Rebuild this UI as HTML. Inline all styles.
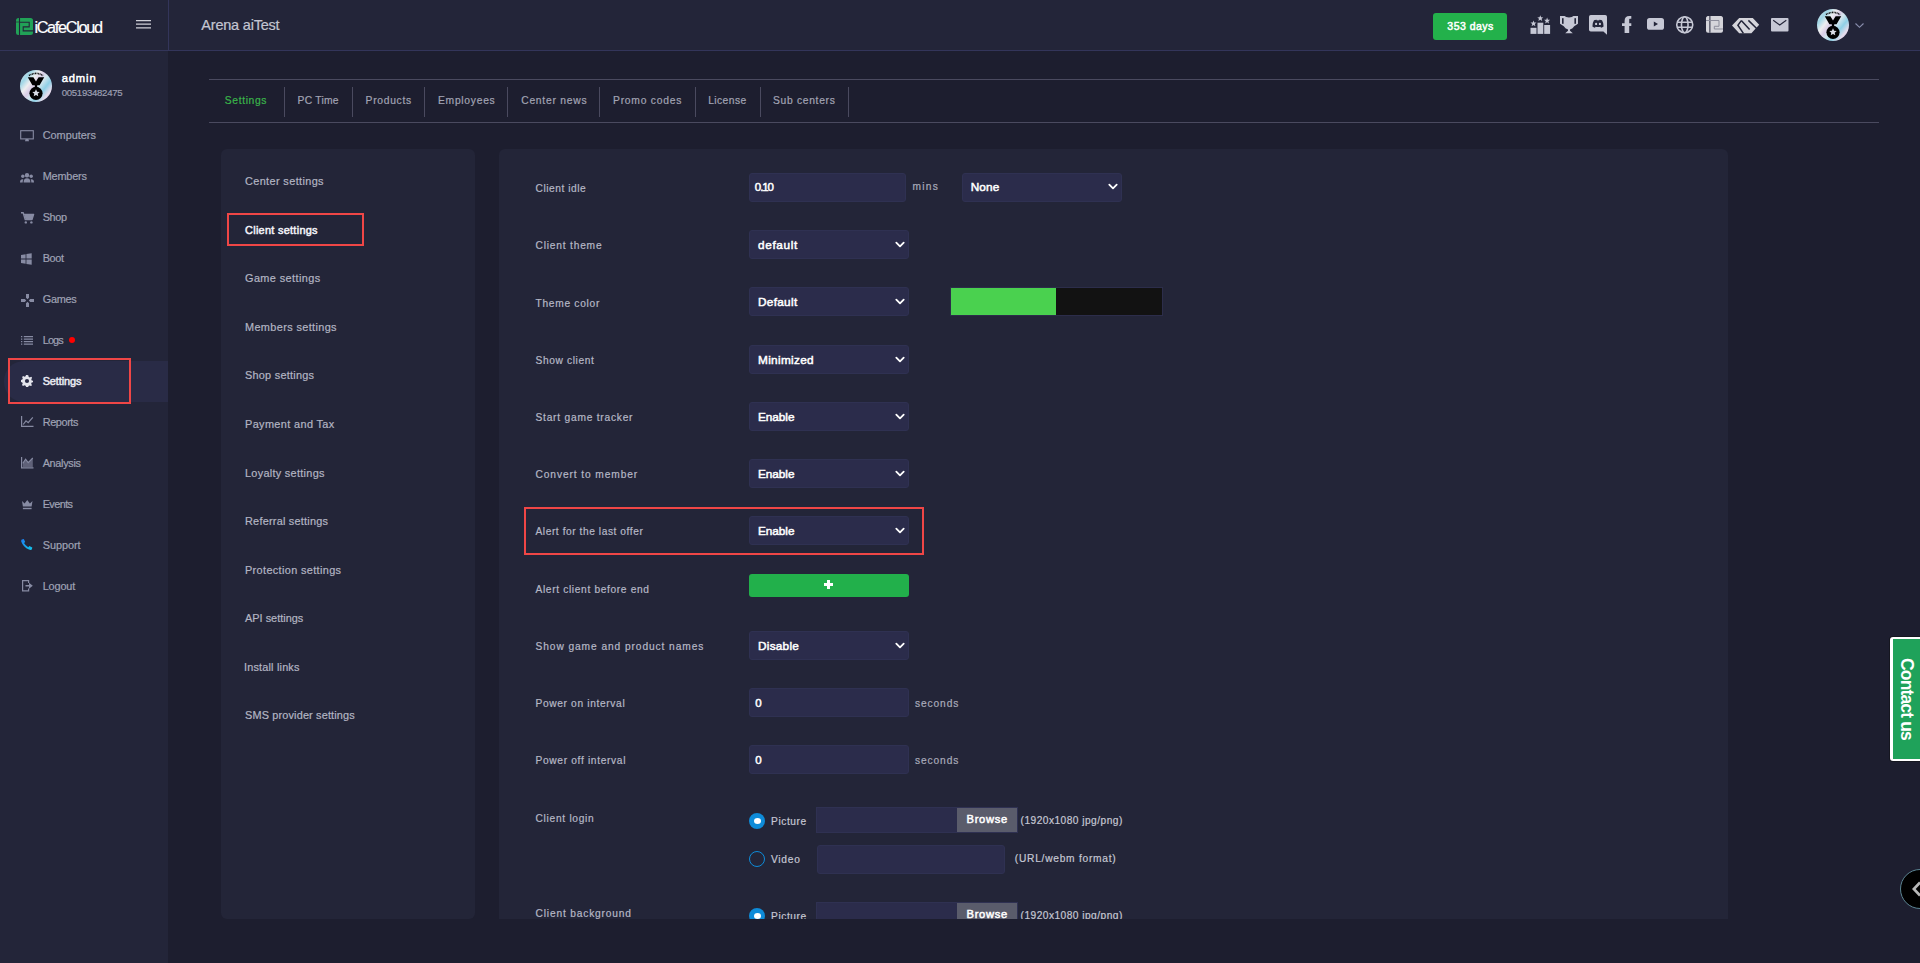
<!DOCTYPE html>
<html><head><meta charset="utf-8">
<style>
html,body{margin:0;padding:0;}
body{width:1920px;height:963px;overflow:hidden;background:#1d1e2f;position:relative;font-family:"Liberation Sans",sans-serif;}
.a{position:absolute;box-sizing:border-box;}
.t{position:absolute;white-space:nowrap;line-height:1;}
.s{-webkit-text-stroke:0.2px currentColor;}
.m{-webkit-text-stroke:0.5px currentColor;}
svg{position:absolute;overflow:visible;}
.clip{position:absolute;left:499px;top:149px;width:1229px;height:770px;overflow:hidden;}
</style></head><body>
<div class="a" style="left:0px;top:0px;width:1920px;height:50px;background:#232539;"></div>
<div class="a" style="left:0px;top:50px;width:1920px;height:1px;background:#33355a;"></div>
<div class="a" style="left:168px;top:0px;width:1px;height:50px;background:#33355a;"></div>
<div class="a" style="left:1433px;top:13px;width:74px;height:27px;background:#23b14b;border-radius:3px;"></div>
<div class="a" style="left:0px;top:51px;width:168px;height:912px;background:#232539;"></div>
<div class="a" style="left:4px;top:361px;width:164px;height:41px;background:#292b46;border-radius:20px 0 0 20px;"></div>
<div class="a" style="left:8px;top:358px;width:123px;height:46px;border:2px solid #ef4646;"></div>
<div class="a" style="left:69px;top:337px;width:6px;height:6px;background:#ff0000;border-radius:50%;"></div>
<div class="a" style="left:209px;top:79px;width:1670px;height:1px;background:#4a4a5f;"></div>
<div class="a" style="left:209px;top:122px;width:1670px;height:1px;background:#4a4a5f;"></div>
<div class="a" style="left:284px;top:87px;width:1px;height:30px;background:#4a4a5f;"></div>
<div class="a" style="left:352px;top:87px;width:1px;height:30px;background:#4a4a5f;"></div>
<div class="a" style="left:424px;top:87px;width:1px;height:30px;background:#4a4a5f;"></div>
<div class="a" style="left:507px;top:87px;width:1px;height:30px;background:#4a4a5f;"></div>
<div class="a" style="left:599px;top:87px;width:1px;height:30px;background:#4a4a5f;"></div>
<div class="a" style="left:695px;top:87px;width:1px;height:30px;background:#4a4a5f;"></div>
<div class="a" style="left:760px;top:87px;width:1px;height:30px;background:#4a4a5f;"></div>
<div class="a" style="left:848px;top:87px;width:1px;height:30px;background:#4a4a5f;"></div>
<div class="a" style="left:221px;top:149px;width:254px;height:770px;background:#232538;border-radius:6px;"></div>
<div class="a" style="left:499px;top:149px;width:1229px;height:770px;background:#232538;border-radius:6px 6px 0 0;"></div>
<div class="a" style="left:227px;top:213px;width:137px;height:33px;border:2px solid #ef4646;"></div>
<div class="a" style="left:749px;top:173px;width:157px;height:29px;background:#2b2c4b;border:1px solid #2f3152;border-radius:3px;"></div>
<div class="a" style="left:962px;top:173px;width:160px;height:29px;background:#2b2c4b;border:1px solid #2f3152;border-radius:3px;"></div>
<svg style="left:1108px;top:183.5px" width="10" height="7" viewBox="0 0 10 7"><path d="M1.3 0.6 L5 4.3 L8.7 0.6" fill="none" stroke="#ffffff" stroke-width="1.8" stroke-linecap="round" stroke-linejoin="round"/></svg>
<div class="a" style="left:749px;top:230px;width:160px;height:29px;background:#2b2c4b;border:1px solid #2f3152;border-radius:3px;"></div>
<svg style="left:895px;top:241.5px" width="10" height="7" viewBox="0 0 10 7"><path d="M1.3 0.6 L5 4.3 L8.7 0.6" fill="none" stroke="#ffffff" stroke-width="1.8" stroke-linecap="round" stroke-linejoin="round"/></svg>
<div class="a" style="left:749px;top:287px;width:160px;height:29px;background:#2b2c4b;border:1px solid #2f3152;border-radius:3px;"></div>
<svg style="left:895px;top:298.5px" width="10" height="7" viewBox="0 0 10 7"><path d="M1.3 0.6 L5 4.3 L8.7 0.6" fill="none" stroke="#ffffff" stroke-width="1.8" stroke-linecap="round" stroke-linejoin="round"/></svg>
<div class="a" style="left:749px;top:345px;width:160px;height:29px;background:#2b2c4b;border:1px solid #2f3152;border-radius:3px;"></div>
<svg style="left:895px;top:356.5px" width="10" height="7" viewBox="0 0 10 7"><path d="M1.3 0.6 L5 4.3 L8.7 0.6" fill="none" stroke="#ffffff" stroke-width="1.8" stroke-linecap="round" stroke-linejoin="round"/></svg>
<div class="a" style="left:749px;top:402px;width:160px;height:29px;background:#2b2c4b;border:1px solid #2f3152;border-radius:3px;"></div>
<svg style="left:895px;top:413.5px" width="10" height="7" viewBox="0 0 10 7"><path d="M1.3 0.6 L5 4.3 L8.7 0.6" fill="none" stroke="#ffffff" stroke-width="1.8" stroke-linecap="round" stroke-linejoin="round"/></svg>
<div class="a" style="left:749px;top:459px;width:160px;height:29px;background:#2b2c4b;border:1px solid #2f3152;border-radius:3px;"></div>
<svg style="left:895px;top:470.5px" width="10" height="7" viewBox="0 0 10 7"><path d="M1.3 0.6 L5 4.3 L8.7 0.6" fill="none" stroke="#ffffff" stroke-width="1.8" stroke-linecap="round" stroke-linejoin="round"/></svg>
<div class="a" style="left:749px;top:516px;width:160px;height:29px;background:#2b2c4b;border:1px solid #2f3152;border-radius:3px;"></div>
<svg style="left:895px;top:527.5px" width="10" height="7" viewBox="0 0 10 7"><path d="M1.3 0.6 L5 4.3 L8.7 0.6" fill="none" stroke="#ffffff" stroke-width="1.8" stroke-linecap="round" stroke-linejoin="round"/></svg>
<div class="a" style="left:749px;top:631px;width:160px;height:29px;background:#2b2c4b;border:1px solid #2f3152;border-radius:3px;"></div>
<svg style="left:895px;top:642.5px" width="10" height="7" viewBox="0 0 10 7"><path d="M1.3 0.6 L5 4.3 L8.7 0.6" fill="none" stroke="#ffffff" stroke-width="1.8" stroke-linecap="round" stroke-linejoin="round"/></svg>
<div class="a" style="left:950px;top:287px;width:213px;height:29px;background:#121212;border:1px solid #2c2d4a;"></div>
<div class="a" style="left:951px;top:288px;width:105px;height:27px;background:#4ad14f;"></div>
<div class="a" style="left:749px;top:574px;width:160px;height:23px;background:#22b04b;border-radius:3px;"></div>
<div class="a" style="left:824px;top:583px;width:9px;height:3px;background:#fff;"></div>
<div class="a" style="left:827px;top:580px;width:3px;height:9px;background:#fff;"></div>
<div class="a" style="left:524px;top:507px;width:400px;height:48px;border:2px solid #ef4646;"></div>
<div class="a" style="left:749px;top:688px;width:160px;height:29px;background:#2b2c4b;border:1px solid #2f3152;border-radius:3px;"></div>
<div class="a" style="left:749px;top:745px;width:160px;height:29px;background:#2b2c4b;border:1px solid #2f3152;border-radius:3px;"></div>
<div class="a" style="left:749px;top:813px;width:16px;height:16px;border-radius:50%;background:#0e8bd8;"></div>
<div class="a" style="left:753.5px;top:818px;width:7px;height:6px;border-radius:50%;background:#fff;"></div>
<div class="a" style="left:816px;top:807px;width:202px;height:26px;background:#2b2c4b;border:1px solid #2f3152;"></div>
<div class="a" style="left:957px;top:808px;width:60px;height:24px;background:#5a5c6b;"></div>
<div class="a" style="left:749px;top:851px;width:16px;height:16px;border-radius:50%;border:1.5px solid #0e8bd8;"></div>
<div class="a" style="left:817px;top:845px;width:188px;height:29px;background:#2b2c4b;border:1px solid #2f3152;border-radius:3px;"></div>
<div class="a" style="left:749px;top:908px;width:16px;height:16px;border-radius:50%;background:#0e8bd8;"></div>
<div class="a" style="left:753.5px;top:913px;width:7px;height:6px;border-radius:50%;background:#fff;"></div>
<div class="a" style="left:816px;top:902px;width:202px;height:26px;background:#2b2c4b;border:1px solid #2f3152;"></div>
<div class="a" style="left:957px;top:903px;width:60px;height:24px;background:#5a5c6b;"></div>
<div class="t s" id="t0" style="left:34.40px;top:19.10px;font-size:16.3px;font-weight:400;color:#ffffff;letter-spacing:-1.333px;">iCafeCloud</div>
<div class="t s" id="t1" style="left:201.30px;top:18.22px;font-size:14.5px;font-weight:400;color:#c3c5d2;letter-spacing:-0.206px;">Arena aiTest</div>
<div class="t m" id="t2" style="left:1447.30px;top:21.11px;font-size:10.5px;font-weight:400;color:#ffffff;letter-spacing:0.491px;">353 days</div>
<div class="t m" id="t3" style="left:61.70px;top:73.42px;font-size:11.2px;font-weight:400;color:#ffffff;letter-spacing:0.863px;">admin</div>
<div class="t s" id="t4" style="left:61.70px;top:88.27px;font-size:9.6px;font-weight:400;color:#9c9fb2;letter-spacing:-0.281px;">005193482475</div>
<div class="t s" id="t5" style="left:42.70px;top:130.37px;font-size:10.9px;font-weight:400;color:#9fa2b4;letter-spacing:-0.015px;">Computers</div>
<div class="t s" id="t6" style="left:42.70px;top:171.37px;font-size:10.9px;font-weight:400;color:#9fa2b4;letter-spacing:-0.190px;">Members</div>
<div class="t s" id="t7" style="left:42.70px;top:212.37px;font-size:10.9px;font-weight:400;color:#9fa2b4;letter-spacing:-0.359px;">Shop</div>
<div class="t s" id="t8" style="left:42.70px;top:253.37px;font-size:10.9px;font-weight:400;color:#9fa2b4;letter-spacing:-0.359px;">Boot</div>
<div class="t s" id="t9" style="left:42.70px;top:294.37px;font-size:10.9px;font-weight:400;color:#9fa2b4;letter-spacing:-0.264px;">Games</div>
<div class="t s" id="t10" style="left:42.70px;top:335.37px;font-size:10.9px;font-weight:400;color:#9fa2b4;letter-spacing:-0.857px;">Logs</div>
<div class="t m" id="t11" style="left:42.70px;top:376.37px;font-size:10.9px;font-weight:400;color:#e9eaf2;letter-spacing:-0.087px;">Settings</div>
<div class="t s" id="t12" style="left:42.70px;top:417.37px;font-size:10.9px;font-weight:400;color:#9fa2b4;letter-spacing:-0.398px;">Reports</div>
<div class="t s" id="t13" style="left:42.70px;top:458.37px;font-size:10.9px;font-weight:400;color:#9fa2b4;letter-spacing:-0.330px;">Analysis</div>
<div class="t s" id="t14" style="left:42.70px;top:499.37px;font-size:10.9px;font-weight:400;color:#9fa2b4;letter-spacing:-0.590px;">Events</div>
<div class="t s" id="t15" style="left:42.70px;top:540.37px;font-size:10.9px;font-weight:400;color:#9fa2b4;letter-spacing:-0.053px;">Support</div>
<div class="t s" id="t16" style="left:42.70px;top:581.37px;font-size:10.9px;font-weight:400;color:#9fa2b4;letter-spacing:-0.137px;">Logout</div>
<div class="t s" id="t17" style="left:224.80px;top:96.28px;font-size:10.3px;font-weight:500;color:#3ab54a;letter-spacing:0.635px;">Settings</div>
<div class="t s" id="t18" style="left:297.50px;top:96.28px;font-size:10.3px;font-weight:400;color:#a2a4b4;letter-spacing:0.260px;">PC Time</div>
<div class="t s" id="t19" style="left:365.60px;top:96.28px;font-size:10.3px;font-weight:400;color:#a2a4b4;letter-spacing:0.702px;">Products</div>
<div class="t s" id="t20" style="left:438.00px;top:96.28px;font-size:10.3px;font-weight:400;color:#a2a4b4;letter-spacing:0.727px;">Employees</div>
<div class="t s" id="t21" style="left:521.20px;top:96.28px;font-size:10.3px;font-weight:400;color:#a2a4b4;letter-spacing:0.754px;">Center news</div>
<div class="t s" id="t22" style="left:613.00px;top:96.28px;font-size:10.3px;font-weight:400;color:#a2a4b4;letter-spacing:0.768px;">Promo codes</div>
<div class="t s" id="t23" style="left:708.20px;top:96.28px;font-size:10.3px;font-weight:400;color:#a2a4b4;letter-spacing:0.423px;">License</div>
<div class="t s" id="t24" style="left:773.00px;top:96.28px;font-size:10.3px;font-weight:400;color:#a2a4b4;letter-spacing:0.690px;">Sub centers</div>
<div class="t s" id="t25" style="left:245.00px;top:176.27px;font-size:10.9px;font-weight:400;color:#b3b5c3;letter-spacing:0.379px;">Center settings</div>
<div class="t m" id="t26" style="left:245.00px;top:224.82px;font-size:10.9px;font-weight:400;color:#f2f3f8;letter-spacing:0.296px;">Client settings</div>
<div class="t s" id="t27" style="left:245.00px;top:273.37px;font-size:10.9px;font-weight:400;color:#b3b5c3;letter-spacing:0.411px;">Game settings</div>
<div class="t s" id="t28" style="left:245.00px;top:321.92px;font-size:10.9px;font-weight:400;color:#b3b5c3;letter-spacing:0.373px;">Members settings</div>
<div class="t s" id="t29" style="left:245.00px;top:370.47px;font-size:10.9px;font-weight:400;color:#b3b5c3;letter-spacing:0.246px;">Shop settings</div>
<div class="t s" id="t30" style="left:245.00px;top:419.02px;font-size:10.9px;font-weight:400;color:#b3b5c3;letter-spacing:0.379px;">Payment and Tax</div>
<div class="t s" id="t31" style="left:245.00px;top:467.57px;font-size:10.9px;font-weight:400;color:#b3b5c3;letter-spacing:0.292px;">Loyalty settings</div>
<div class="t s" id="t32" style="left:245.00px;top:516.12px;font-size:10.9px;font-weight:400;color:#b3b5c3;letter-spacing:0.228px;">Referral settings</div>
<div class="t s" id="t33" style="left:245.00px;top:564.67px;font-size:10.9px;font-weight:400;color:#b3b5c3;letter-spacing:0.358px;">Protection settings</div>
<div class="t s" id="t34" style="left:245.00px;top:613.22px;font-size:10.9px;font-weight:400;color:#b3b5c3;letter-spacing:0.012px;">API settings</div>
<div class="t s" id="t35" style="left:244.00px;top:661.77px;font-size:10.9px;font-weight:400;color:#b3b5c3;letter-spacing:0.182px;">Install links</div>
<div class="t s" id="t36" style="left:245.00px;top:710.32px;font-size:10.9px;font-weight:400;color:#b3b5c3;letter-spacing:0.161px;">SMS provider settings</div>
<div class="t s" id="t37" style="left:535.50px;top:184.26px;font-size:10.2px;font-weight:400;color:#b6b8c6;letter-spacing:0.543px;">Client idle</div>
<div class="t s" id="t38" style="left:535.50px;top:241.46px;font-size:10.2px;font-weight:400;color:#b6b8c6;letter-spacing:0.807px;">Client theme</div>
<div class="t s" id="t39" style="left:535.50px;top:298.66px;font-size:10.2px;font-weight:400;color:#b6b8c6;letter-spacing:0.717px;">Theme color</div>
<div class="t s" id="t40" style="left:535.50px;top:355.86px;font-size:10.2px;font-weight:400;color:#b6b8c6;letter-spacing:0.633px;">Show client</div>
<div class="t s" id="t41" style="left:535.50px;top:413.06px;font-size:10.2px;font-weight:400;color:#b6b8c6;letter-spacing:0.776px;">Start game tracker</div>
<div class="t s" id="t42" style="left:535.50px;top:470.26px;font-size:10.2px;font-weight:400;color:#b6b8c6;letter-spacing:0.906px;">Convert to member</div>
<div class="t s" id="t43" style="left:535.50px;top:527.46px;font-size:10.2px;font-weight:400;color:#b6b8c6;letter-spacing:0.562px;">Alert for the last offer</div>
<div class="t s" id="t44" style="left:535.50px;top:584.66px;font-size:10.2px;font-weight:400;color:#b6b8c6;letter-spacing:0.653px;">Alert client before end</div>
<div class="t s" id="t45" style="left:535.50px;top:641.86px;font-size:10.2px;font-weight:400;color:#b6b8c6;letter-spacing:0.925px;">Show game and product names</div>
<div class="t s" id="t46" style="left:535.50px;top:699.06px;font-size:10.2px;font-weight:400;color:#b6b8c6;letter-spacing:0.653px;">Power on interval</div>
<div class="t s" id="t47" style="left:535.50px;top:756.26px;font-size:10.2px;font-weight:400;color:#b6b8c6;letter-spacing:0.673px;">Power off interval</div>
<div class="t s" id="t48" style="left:535.50px;top:814.36px;font-size:10.2px;font-weight:400;color:#b6b8c6;letter-spacing:0.715px;">Client login</div>
<div class="t s" id="t49" style="left:535.50px;top:909.36px;font-size:10.2px;font-weight:400;color:#b6b8c6;letter-spacing:0.834px;">Client background</div>
<div class="t m" id="t50" style="left:754.80px;top:182.16px;font-size:11.5px;font-weight:400;color:#ffffff;letter-spacing:-1.062px;">0.10</div>
<div class="t s" id="t51" style="left:912.50px;top:182.36px;font-size:10.2px;font-weight:400;color:#a9abba;letter-spacing:1.295px;">mins</div>
<div class="t m" id="t52" style="left:970.70px;top:182.31px;font-size:11.8px;font-weight:400;color:#ffffff;letter-spacing:0.153px;">None</div>
<div class="t m" id="t53" style="left:758.00px;top:240.31px;font-size:11.8px;font-weight:400;color:#ffffff;letter-spacing:0.643px;">default</div>
<div class="t m" id="t54" style="left:758.00px;top:297.31px;font-size:11.8px;font-weight:400;color:#ffffff;letter-spacing:0.300px;">Default</div>
<div class="t m" id="t55" style="left:758.00px;top:355.31px;font-size:11.8px;font-weight:400;color:#ffffff;letter-spacing:0.320px;">Minimized</div>
<div class="t m" id="t56" style="left:758.00px;top:412.31px;font-size:11.8px;font-weight:400;color:#ffffff;letter-spacing:-0.054px;">Enable</div>
<div class="t m" id="t57" style="left:758.00px;top:469.31px;font-size:11.8px;font-weight:400;color:#ffffff;letter-spacing:-0.054px;">Enable</div>
<div class="t m" id="t58" style="left:758.00px;top:526.31px;font-size:11.8px;font-weight:400;color:#ffffff;letter-spacing:-0.054px;">Enable</div>
<div class="t m" id="t59" style="left:758.00px;top:641.31px;font-size:11.8px;font-weight:400;color:#ffffff;letter-spacing:0.253px;">Disable</div>
<div class="t m" id="t60" style="left:755.20px;top:697.56px;font-size:11.5px;font-weight:400;color:#ffffff;letter-spacing:0.000px;">0</div>
<div class="t s" id="t61" style="left:914.90px;top:698.66px;font-size:10.2px;font-weight:400;color:#a9abba;letter-spacing:0.925px;">seconds</div>
<div class="t m" id="t62" style="left:755.20px;top:754.56px;font-size:11.5px;font-weight:400;color:#ffffff;letter-spacing:0.000px;">0</div>
<div class="t s" id="t63" style="left:914.90px;top:755.66px;font-size:10.2px;font-weight:400;color:#a9abba;letter-spacing:0.925px;">seconds</div>
<div class="t s" id="t64" style="left:771.00px;top:817.16px;font-size:10.2px;font-weight:400;color:#c5c7d3;letter-spacing:0.593px;">Picture</div>
<div class="t m" id="t65" style="left:966.50px;top:814.32px;font-size:11.2px;font-weight:400;color:#ffffff;letter-spacing:0.664px;">Browse</div>
<div class="t s" id="t66" style="left:1020.60px;top:815.96px;font-size:10.2px;font-weight:400;color:#c5c7d3;letter-spacing:0.457px;">(1920x1080 jpg/png)</div>
<div class="t s" id="t67" style="left:771.00px;top:855.46px;font-size:10.2px;font-weight:400;color:#c5c7d3;letter-spacing:0.749px;">Video</div>
<div class="t s" id="t68" style="left:1014.80px;top:853.96px;font-size:10.2px;font-weight:400;color:#c5c7d3;letter-spacing:0.751px;">(URL/webm format)</div>
<div class="t s" id="t69" style="left:771.00px;top:912.16px;font-size:10.2px;font-weight:400;color:#c5c7d3;letter-spacing:0.593px;">Picture</div>
<div class="t m" id="t70" style="left:966.50px;top:909.32px;font-size:11.2px;font-weight:400;color:#ffffff;letter-spacing:0.664px;">Browse</div>
<div class="t s" id="t71" style="left:1020.60px;top:910.96px;font-size:10.2px;font-weight:400;color:#c5c7d3;letter-spacing:0.457px;">(1920x1080 jpg/png)</div>
<!-- logo -->
<svg style="left:16px;top:18px" width="17" height="17" viewBox="0 0 17 17">
<rect x="0" y="0" width="17" height="17" rx="2.5" fill="#21a257"/>
<path d="M3.5 0 V17" stroke="#232539" stroke-width="1.1"/>
<path d="M0 4 H3" stroke="#2a3d3a" stroke-width="0.8"/>
<path d="M4 4.2 H13.2 V8.9 H7.2 V12.9 H17" fill="none" stroke="#232539" stroke-width="1.1"/>
</svg>
<!-- hamburger -->
<svg style="left:136px;top:19px" width="15" height="11" viewBox="0 0 15 11">
<path d="M0 1.6 H15 M0 5.2 H15 M0 8.9 H15" stroke="#cfd0d8" stroke-width="1.3"/>
</svg>
<!-- sidebar icons -->
<svg style="left:20px;top:130px" width="14" height="12" viewBox="0 0 14 12">
<rect x="0.7" y="0.7" width="12.6" height="8.2" fill="none" stroke="#878ba3" stroke-width="1.1"/>
<path d="M5.6 9 L5 11.2 H9 L8.4 9 Z" fill="#878ba3"/>
</svg>
<svg style="left:20px;top:172.5px" width="14" height="10" viewBox="0 0 14 10">
<circle cx="7" cy="2.2" r="2.2" fill="#878ba3"/>
<circle cx="2.8" cy="3.2" r="1.7" fill="#878ba3"/>
<circle cx="11.2" cy="3.2" r="1.7" fill="#878ba3"/>
<path d="M3.6 9.5 Q3.6 5.3 7 5.3 Q10.4 5.3 10.4 9.5 Z" fill="#878ba3"/>
<path d="M0 9.5 Q0 6.2 2.6 6.2 Q3.3 6.2 3.4 6.6 Q2.6 7.8 2.7 9.5 Z" fill="#878ba3"/>
<path d="M14 9.5 Q14 6.2 11.4 6.2 Q10.7 6.2 10.6 6.6 Q11.4 7.8 11.3 9.5 Z" fill="#878ba3"/>
</svg>
<svg style="left:20.5px;top:212px" width="13" height="12" viewBox="0 0 13 12">
<path d="M0 0.8 H2.2 L4.2 7.6 H11 L12.6 2.4 H3" fill="none" stroke="#878ba3" stroke-width="1.4" stroke-linejoin="round"/>
<path d="M3.2 2.4 H12.6 L11 7.4 H4.5 Z" fill="#878ba3"/>
<circle cx="4.8" cy="10.4" r="1.2" fill="#878ba3"/>
<circle cx="10.4" cy="10.4" r="1.2" fill="#878ba3"/>
</svg>
<svg style="left:21.3px;top:253px" width="11" height="12" viewBox="0 0 11 12">
<path d="M0 2 L4.6 1.3 V5.6 H0 Z M5.4 1.1 L10.7 0.2 V5.6 H5.4 Z M0 6.4 H4.6 V10.7 L0 10 Z M5.4 6.4 H10.7 V11.8 L5.4 10.9 Z" fill="#878ba3"/>
</svg>
<svg style="left:20.5px;top:293.5px" width="13" height="13" viewBox="0 0 13 13">
<path d="M5 0 H8 V3.8 L6.5 5.2 L5 3.8 Z M5 13 H8 V9.2 L6.5 7.8 L5 9.2 Z M0 5 V8 H3.8 L5.2 6.5 L3.8 5 Z M13 5 V8 H9.2 L7.8 6.5 L9.2 5 Z" fill="#878ba3"/>
</svg>
<svg style="left:21px;top:336px" width="12" height="9" viewBox="0 0 12 9">
<path d="M0 0.7 H1.3 M0 3.2 H1.3 M0 5.7 H1.3 M0 8.2 H1.3" stroke="#878ba3" stroke-width="1.2"/>
<path d="M2.8 0.7 H12 M2.8 3.2 H12 M2.8 5.7 H12 M2.8 8.2 H12" stroke="#878ba3" stroke-width="1.2"/>
</svg>
<svg style="left:21px;top:375px" width="12" height="12" viewBox="0 0 12 12">
<path d="M6 0 L7.3 0.2 L7.6 1.8 L8.7 2.4 L10.2 1.7 L11.1 2.7 L10.3 4.2 L10.7 5.4 L12 5.8 V7.2 L10.6 7.6 L10.2 8.8 L11 10.2 L10 11.1 L8.6 10.4 L7.5 10.9 L7.2 12 H5.1 L4.6 10.8 L3.5 10.3 L2 11 L1 10 L1.7 8.6 L1.3 7.5 L0 7.1 V5.1 L1.3 4.6 L1.8 3.4 L1.1 2 L2.1 1 L3.5 1.7 L4.6 1.2 L5 0 Z" fill="#e3e4ec"/>
<circle cx="6" cy="6" r="2.1" fill="#292b46"/>
</svg>
<svg style="left:21px;top:416px" width="12.5" height="11" viewBox="0 0 12.5 11">
<path d="M0.6 0 V10.4 H12.5" fill="none" stroke="#878ba3" stroke-width="1.2"/>
<path d="M2.2 8.5 L5 4.8 L7.2 6.6 L11.8 1.4" fill="none" stroke="#878ba3" stroke-width="1.2"/>
</svg>
<svg style="left:21px;top:456.7px" width="12.5" height="11.5" viewBox="0 0 12.5 11.5">
<path d="M0.6 0 V10.9 H12.5" fill="none" stroke="#878ba3" stroke-width="1.2"/>
<path d="M1.8 10 V6.4 L4.6 2.2 L7.2 5.6 L11.8 1 V10 Z" fill="#878ba3" fill-opacity="0.6"/>
<path d="M1.8 6.4 L4.6 2.2 L7.2 5.6 L11.8 1" fill="none" stroke="#878ba3" stroke-width="1.1"/>
</svg>
<svg style="left:22px;top:499.5px" width="10.5" height="9.5" viewBox="0 0 10.5 9.5">
<path d="M0 1 L2.6 3.6 L5.25 0 L7.9 3.6 L10.5 1 L9.6 6.6 H0.9 Z" fill="#878ba3"/>
<rect x="0.9" y="7.8" width="8.7" height="1.4" fill="#878ba3"/>
</svg>
<svg style="left:21.2px;top:539px" width="11.5" height="11" viewBox="0 0 11.5 11">
<defs><linearGradient id="ph" x1="0" y1="0" x2="1" y2="1"><stop offset="0" stop-color="#1c7cf0"/><stop offset="1" stop-color="#12c6e8"/></linearGradient></defs>
<path d="M0.8 0.6 L2.8 0 L4.2 2.9 L3 4.1 Q4.6 6.9 7.2 8.3 L8.4 7.1 L11.3 8.5 L10.8 10.6 Q9.8 11.2 8 10.6 Q2.2 8 0.2 2.4 Q0 1.4 0.8 0.6 Z" fill="url(#ph)"/>
</svg>
<svg style="left:21.5px;top:580px" width="11" height="11.5" viewBox="0 0 11 11.5">
<path d="M6.6 3 V0.6 H0.6 V10.9 H6.6 V8.5" fill="none" stroke="#878ba3" stroke-width="1.2"/>
<path d="M3.5 4.9 H7 V2.8 L10.8 5.75 L7 8.7 V6.6 H3.5 Z" fill="#878ba3"/>
</svg>

<div class="a" style="left:480px;top:919px;width:1300px;height:44px;background:#1d1e2f;"></div>
<!-- avatar sidebar -->
<svg style="left:20px;top:69.7px" width="32" height="32" viewBox="0 0 32 32">
<defs>
<linearGradient id="irid" x1="0" y1="0.1" x2="1" y2="0.9">
<stop offset="0" stop-color="#dfe6ea"/>
<stop offset="0.18" stop-color="#9fd6e6"/>
<stop offset="0.33" stop-color="#eeeef0"/>
<stop offset="0.45" stop-color="#d9cde6"/>
<stop offset="0.55" stop-color="#d3e6ee"/>
<stop offset="0.7" stop-color="#8fd0e6"/>
<stop offset="0.85" stop-color="#e6dcec"/>
<stop offset="1" stop-color="#c6b6e0"/>
</linearGradient>
</defs>
<circle cx="16" cy="16" r="16" fill="url(#irid)"/>
<path d="M7.8 7.2 H13.4 L16 11.6 L18.6 7.2 H24.2 L19.6 15.2 H12.4 Z" fill="#000"/>
<rect x="14.8" y="14.5" width="2.4" height="3" fill="#000"/>
<circle cx="16" cy="23.3" r="6.6" fill="#000"/>
<path d="M16 19.3 L17.1 21.8 L19.7 22 L17.7 23.7 L18.3 26.3 L16 24.9 L13.7 26.3 L14.3 23.7 L12.3 22 L14.9 21.8 Z" fill="#d9dde6"/>
<path d="M9 5.6 Q16 1.2 23 5.6" fill="none" stroke="#111" stroke-width="1.6" stroke-dasharray="1 0.6"/>
</svg>
<!-- avatar header -->
<svg style="left:1817px;top:9px" width="32" height="32" viewBox="0 0 32 32">
<circle cx="16" cy="16" r="16" fill="url(#irid)"/>
<path d="M7.8 7.2 H13.4 L16 11.6 L18.6 7.2 H24.2 L19.6 15.2 H12.4 Z" fill="#000"/>
<rect x="14.8" y="14.5" width="2.4" height="3" fill="#000"/>
<circle cx="16" cy="23.3" r="6.6" fill="#000"/>
<path d="M16 19.3 L17.1 21.8 L19.7 22 L17.7 23.7 L18.3 26.3 L16 24.9 L13.7 26.3 L14.3 23.7 L12.3 22 L14.9 21.8 Z" fill="#d9dde6"/>
<path d="M9 5.6 Q16 1.2 23 5.6" fill="none" stroke="#111" stroke-width="1.6" stroke-dasharray="1 0.6"/>
</svg>
<svg style="left:1855px;top:23px" width="9" height="5" viewBox="0 0 9 5">
<path d="M0.5 0.5 L4.5 4.3 L8.5 0.5" fill="none" stroke="#8a8fae" stroke-width="1.1"/>
</svg>
<!-- top icons -->
<svg style="left:1529.5px;top:15px" width="21" height="19" viewBox="0 0 21 19">
<rect x="0.5" y="12.8" width="6" height="6.1" fill="#c6c8d5"/>
<rect x="7.5" y="7.7" width="5.8" height="11.2" fill="#c6c8d5"/>
<rect x="14.2" y="10" width="5.9" height="8.9" fill="#c6c8d5"/>
<path d="M3.5 5.4 L4.3 7.5 L6.5 7.6 L4.8 9 L5.4 11.2 L3.5 10 L1.6 11.2 L2.2 9 L0.5 7.6 L2.7 7.5 Z" fill="#c6c8d5"/>
<path d="M10.3 0.2 L11.1 2.3 L13.3 2.4 L11.6 3.8 L12.2 6 L10.3 4.8 L8.4 6 L9 3.8 L7.3 2.4 L9.5 2.3 Z" fill="#c6c8d5"/>
<path d="M17.1 2.6 L17.9 4.7 L20.1 4.8 L18.4 6.2 L19 8.4 L17.1 7.2 L15.2 8.4 L15.8 6.2 L14.1 4.8 L16.3 4.7 Z" fill="#c6c8d5"/>
</svg>
<svg style="left:1560px;top:16px" width="18" height="17.5" viewBox="0 0 18 17.5">
<path d="M0 0 H18 V7.8 L14.2 10.2 Q13 12.4 10 13.4 V14.8 L12.8 17.3 H5.2 L8 14.8 V13.4 Q5 12.4 3.8 10.2 L0 7.8 Z" fill="#c6c8d5"/>
<rect x="2" y="2.2" width="1.6" height="5.6" fill="#232539"/>
<rect x="14.4" y="2.2" width="1.6" height="5.6" fill="#232539"/>
<path d="M4.6 0 Q5.6 1.4 9 1.4 Q12.4 1.4 13.4 0" fill="#232539"/>
</svg>
<svg style="left:1589px;top:15px" width="18" height="20" viewBox="0 0 18 20">
<path d="M1.8 0 H16.2 Q18 0 18 1.8 V19.8 L14.4 16.6 H1.8 Q0 16.6 0 14.8 V1.8 Q0 0 1.8 0 Z" fill="#c6c8d5"/>
<path d="M5 5.2 Q7 4.4 7.6 4.8 L7.9 5.4 Q9 5.2 10.1 5.4 L10.4 4.8 Q11 4.4 13 5.2 Q14.8 8.2 14.6 11.4 Q13.4 12.4 12 12.8 L11.4 11.8 Q9 12.4 6.6 11.8 L6 12.8 Q4.6 12.4 3.4 11.4 Q3.2 8.2 5 5.2 Z" fill="#232539"/>
<ellipse cx="7.1" cy="8.9" rx="1.1" ry="1.2" fill="#c6c8d5"/>
<ellipse cx="10.9" cy="8.9" rx="1.1" ry="1.2" fill="#c6c8d5"/>
</svg>
<svg style="left:1621.8px;top:16px" width="9.5" height="17" viewBox="0 0 9.5 17">
<path d="M2.6 17 V9.9 H0 V7.2 H2.6 V5 Q2.6 0 7.4 0 H9.3 V2.8 H7.8 Q7.2 2.8 7.2 3.6 V7.2 H9.3 V9.9 H7.2 V17 Z" fill="#c6c8d5"/>
</svg>
<svg style="left:1647px;top:18.4px" width="17" height="12" viewBox="0 0 17 12">
<rect x="0" y="0" width="17" height="11.8" rx="2.6" fill="#c6c8d5"/>
<path d="M6.8 3.6 V8.4 L11 6 Z" fill="#232539"/>
</svg>
<svg style="left:1675.7px;top:15.8px" width="17.5" height="17.5" viewBox="0 0 17.5 17.5">
<circle cx="8.75" cy="8.75" r="8" fill="none" stroke="#c6c8d5" stroke-width="1.6"/>
<ellipse cx="8.75" cy="8.75" rx="3.3" ry="8" fill="none" stroke="#c6c8d5" stroke-width="1.6"/>
<path d="M1.2 6.3 H16.3 M1.2 11.2 H16.3" stroke="#c6c8d5" stroke-width="1.6"/>
</svg>
<svg style="left:1705.5px;top:16.3px" width="17" height="16.7" viewBox="0 0 17 16.7">
<rect x="0" y="0" width="17" height="16.7" rx="2" fill="#d5d5db"/>
<path d="M3.9 0 V16.7" stroke="#232539" stroke-width="1"/>
<path d="M0 4.5 H13 V10.3 H8.3 V13 H17" fill="none" stroke="#8c8d9c" stroke-width="1"/>
<path d="M0 0 H1 M16 0 H17" stroke="#232539"/>
</svg>
<svg style="left:1732.3px;top:17.7px" width="27.3" height="15.3" viewBox="0 0 27.3 15.3">
<path d="M0 7.4 L7.2 0 H20.8 L27.2 6.8 L23.9 10.3 L19.4 15.3 H7.2 Z" fill="#d5d5db"/>
<path d="M9.3 2.6 L5.9 7.2 L11.4 15.3 M9.3 2.6 L17.6 11.6 M16.4 2.4 L24.4 10.2" fill="none" stroke="#232539" stroke-width="1.5"/>
</svg>
<svg style="left:1770.8px;top:17.7px" width="17.5" height="13.5" viewBox="0 0 17.5 13.5">
<rect x="0" y="0" width="17.5" height="13.4" rx="1" fill="#c6c8d5"/>
<path d="M2.2 2.3 L8.75 7 L15.3 2.3" fill="none" stroke="#232539" stroke-width="1.1"/>
</svg>
<!-- contact tab -->
<div class="a" style="left:1889px;top:636px;width:34px;height:126px;background:#15161f;border-radius:4px 0 0 4px;"></div>
<div class="a" style="left:1890px;top:637px;width:32px;height:124px;background:#1fa25a;border:2px solid #ffffff;border-left-width:3px;border-right:none;border-radius:3px 0 0 3px;"></div>
<div class="t" style="left:1906px;top:699.3px;font-size:17.5px;font-weight:700;color:#fff;letter-spacing:-0.85px;transform:translate(-50%,-50%) rotate(90deg);transform-origin:center;">Contact us</div>
<!-- round button -->
<div class="a" style="left:1900px;top:869px;width:40px;height:40px;border-radius:50%;background:#000;border:1px solid #5b8492;"></div>
<svg style="left:1912px;top:881px" width="8" height="16" viewBox="0 0 8 16"><path d="M8 1.5 L1.8 8 L8 14.5" fill="none" stroke="#b8b8b8" stroke-width="2.6"/></svg>

</body></html>
